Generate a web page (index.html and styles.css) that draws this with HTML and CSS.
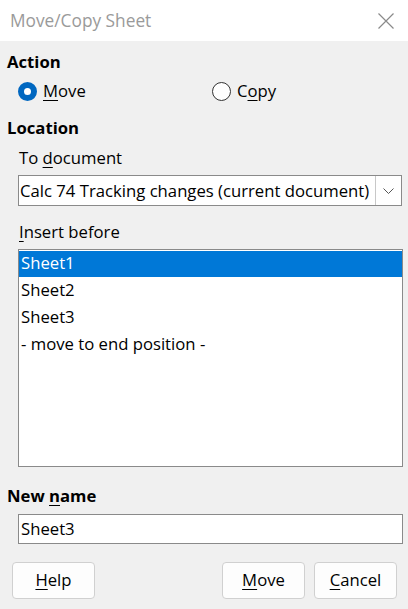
FILE: index.html
```html
<!DOCTYPE html>
<html>
<head>
<meta charset="utf-8">
<link rel="stylesheet" href="styles.css">
</head>
<body>
<div class="dialog">
  <div class="titlebar">
    <span class="title">Move/Copy Sheet</span>
    <svg class="close" width="16" height="16" viewBox="0 0 16 16"><path d="M0.5 0.5 L15.5 15.5 M15.5 0.5 L0.5 15.5" stroke="#8a8a8a" stroke-width="1.2" fill="none"/></svg>
  </div>
  <div class="content">
    <div class="heading h-action">Action</div>
    <div class="radios">
      <label class="radio r-move"><span class="dot on"></span><span><u>M</u>ove</span></label>
      <label class="radio r-copy"><span class="dot"></span><span>C<u>o</u>py</span></label>
    </div>
    <div class="heading h-location">Location</div>
    <div class="indent">
      <div class="label l-todoc">To <u>d</u>ocument</div>
      <div class="combo">
        <span class="combo-text">Calc 74 Tracking changes (current document)</span>
        <span class="combo-btn"><svg width="11" height="6" viewBox="0 0 11 6"><path d="M0.5 0.5 L5.5 5.5 L10.5 0.5" stroke="#555" stroke-width="1" fill="none"/></svg></span>
      </div>
      <div class="label l-insert"><u>I</u>nsert before</div>
      <div class="listbox">
        <div class="item sel">Sheet1</div>
        <div class="item">Sheet2</div>
        <div class="item">Sheet3</div>
        <div class="item">- move to end position -</div>
      </div>
    </div>
    <div class="heading h-newname">New <u>n</u>ame</div>
    <div class="indent">
      <div class="entry">Sheet3</div>
    </div>
    <div class="buttons">
      <button class="btn"><u>H</u>elp</button>
      <span class="spacer"></span>
      <button class="btn"><u>M</u>ove</button>
      <button class="btn"><u>C</u>ancel</button>
    </div>
  </div>
</div>
</body>
</html>
```
FILE: styles.css
```css
html, body {
  margin: 0;
  padding: 0;
}
body {
  width: 408px;
  height: 609px;
  background: #f0f0f0;
  font-family: "Open Sans", "Noto Sans", sans-serif;
  font-size: 16.7px;
  color: #000;
  overflow: hidden;
}
u {
  text-decoration: underline;
  text-underline-offset: 3px;
  text-decoration-thickness: 1px;
}
.dialog {
  display: flex;
  flex-direction: column;
  height: 609px;
}
.titlebar {
  height: 41px;
  background: #fff;
  display: flex;
  align-items: center;
  justify-content: space-between;
  padding: 0 14px 0 10px;
}
.title {
  color: #9a9a9a;
  font-size: 17.3px;
}
.close {
  display: block;
}
.content {
  display: flex;
  flex-direction: column;
}
.heading {
  font-weight: bold;
  line-height: 20px;
  height: 20px;
  padding-left: 7px;
}
.h-action { margin-top: 11px; }
.h-location { margin-top: 17px; }
.h-newname { margin-top: 19px; }
.radios {
  display: flex;
  margin-top: 9px;
  height: 20px;
  padding-left: 18px;
}
.radio {
  display: flex;
  align-items: center;
  gap: 6px;
  line-height: 20px;
}
.r-move { width: 194px; }
.dot {
  width: 17px;
  height: 17px;
  border: 1px solid #333;
  border-radius: 50%;
  box-sizing: content-box;
  background: #fff;
  flex: none;
}
.dot.on {
  width: 7px;
  height: 7px;
  border: 6px solid #0067c0;
  background: #fff;
}
.indent {
  padding-left: 18px;
  padding-right: 5px;
  display: flex;
  flex-direction: column;
}
.label {
  line-height: 20px;
  height: 20px;
  padding-left: 1px;
}
.l-todoc { margin-top: 10px; }
.l-insert { margin-top: 16px; }
.combo {
  margin-top: 7px;
  height: 31px;
  box-sizing: border-box;
  border: 1px solid #8a8a8a;
  background: #fff;
  display: flex;
  align-items: stretch;
  margin-right: 1px;
}
.combo-text {
  flex: 1;
  line-height: 29px;
  padding-left: 1px;
  white-space: nowrap;
  overflow: hidden;
}
.combo-btn {
  width: 25px;
  border-left: 1px solid #c8c8c8;
  display: flex;
  align-items: center;
  justify-content: center;
  background: #fff;
}
.listbox {
  margin-top: 7px;
  height: 218px;
  box-sizing: border-box;
  border: 1px solid #8a8a8a;
  background: #fff;
  padding: 1px 0 0 0;
}
.item {
  height: 27px;
  line-height: 24px;
  padding-left: 2px;
}
.item.sel {
  background: #0078d7;
  color: #fff;
  height: 26px;
  margin-bottom: 1px;
}
.entry {
  margin-top: 8px;
  height: 30px;
  box-sizing: border-box;
  border: 1px solid #8a8a8a;
  background: #fff;
  line-height: 27px;
  padding-left: 2px;
}
.buttons {
  display: flex;
  margin-top: 18px;
  padding: 0 11px 0 12px;
  gap: 9px;
}
.spacer { flex: 1; }
.btn {
  width: 83px;
  height: 37px;
  border: 1px solid #d0d0d0;
  border-radius: 4px;
  background: #fdfdfd;
  font-family: inherit;
  font-size: 16.7px;
  color: #000;
  padding: 0 0 2px 0;
}
```
